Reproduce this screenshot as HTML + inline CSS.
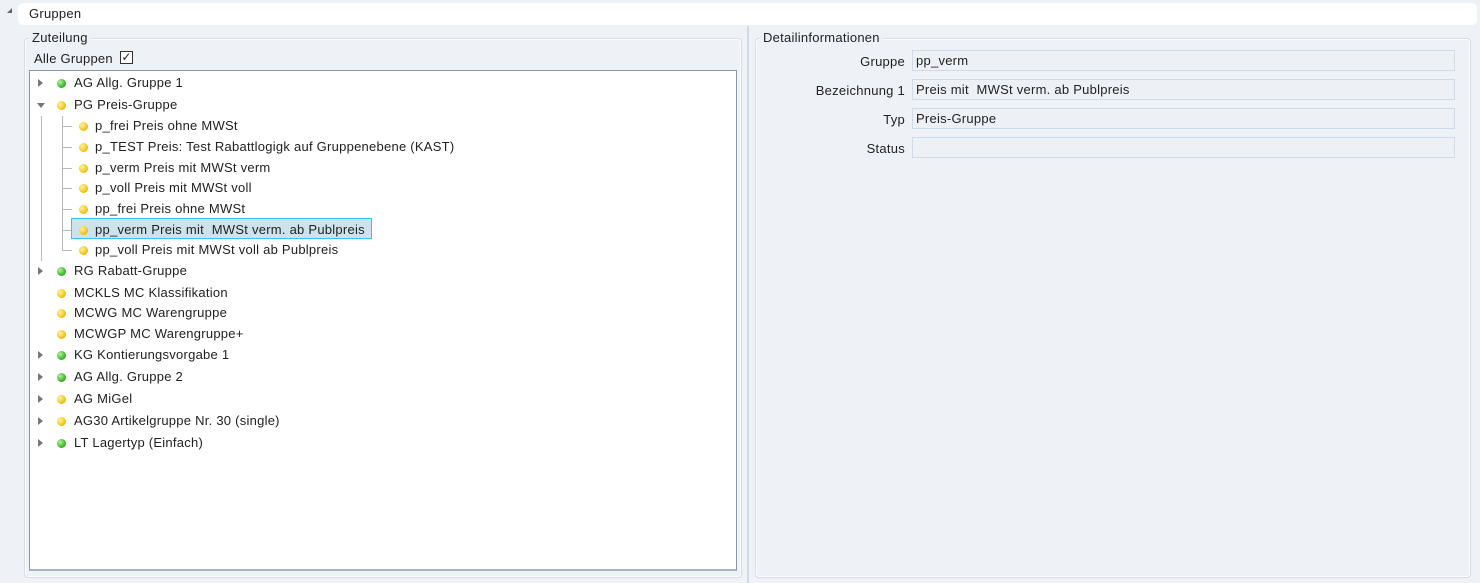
<!DOCTYPE html>
<html><head><meta charset="utf-8"><style>
*{box-sizing:border-box;margin:0;padding:0}
body{width:1480px;height:583px;background:#eef1f6;font-family:"Liberation Sans",sans-serif;font-size:13px;color:#222;position:relative;overflow:hidden;letter-spacing:0.25px}
.a{position:absolute}
.hdr{left:18px;top:3px;width:1459px;height:22px;background:#fff;border-radius:5px;padding:3px 0 0 11px}
.fs{border:1px solid #d6dde6;border-radius:4px;box-shadow:inset 0 0 0 1px #fff}
.leg{background:#eef1f6;padding:0 3px;line-height:14px}
.tree{left:29px;top:70px;width:708px;height:501px;background:#fff;border:1px solid #8a97a8;border-bottom:2px solid #a9b3c0}
.row{position:absolute;white-space:nowrap;line-height:16px;height:16px}
.dot{position:absolute;width:9px;height:9px;border-radius:50%;top:4px}
.g{background:radial-gradient(circle at 35% 35%,#b4f29a,#3cb72a 60%,#2a8f1d)}
.y{background:radial-gradient(circle at 35% 35%,#fff2a8,#f2c617 60%,#c99a0a)}
.tri{position:absolute;width:0;height:0}
.tr{border-left:5px solid #777;border-top:4px solid transparent;border-bottom:4px solid transparent;top:4px}
.td{border-top:5px solid #777;border-left:4px solid transparent;border-right:4px solid transparent;top:6px}
.lbl{position:absolute;width:150px;text-align:right;line-height:21px}
.inp{position:absolute;left:912px;width:543px;height:21px;border:1px solid #cfdbe8;background:#edf0f5;padding:2px 0 0 3px;line-height:15px}
</style></head><body>
<div class="a" style="left:7px;top:8px;border-right:5px solid #666;border-top:5px solid transparent;width:0;height:0"></div>
<div class="a hdr">Gruppen</div>

<div class="a fs" style="left:24px;top:38px;width:718px;height:540px"></div>
<div class="a leg" style="left:29px;top:31px">Zuteilung</div>
<div class="a" style="left:34px;top:51px">Alle Gruppen</div>
<div class="a" style="left:120px;top:51px;width:13px;height:13px;border:1px solid #333;background:#fff;font-size:12px;line-height:11px;text-align:center">✓</div>
<div class="a tree"></div>

<div class="a" style="left:747px;top:26px;width:2px;height:557px;background:#d4dae3"></div>

<div class="a fs" style="left:755px;top:38px;width:716px;height:540px"></div>
<div class="a leg" style="left:760px;top:31px">Detailinformationen</div>

<div class="a lbl" style="left:755px;top:51px">Gruppe</div>
<div class="inp" style="top:50px">pp_verm</div>
<div class="a lbl" style="left:755px;top:80px">Bezeichnung 1</div>
<div class="inp" style="top:79px">Preis mit&nbsp; MWSt verm. ab Publpreis</div>
<div class="a lbl" style="left:755px;top:109px">Typ</div>
<div class="inp" style="top:108px">Preis-Gruppe</div>
<div class="a lbl" style="left:755px;top:138px">Status</div>
<div class="inp" style="top:137px"></div>

<div class="a" style="left:41px;top:116px;width:1px;height:145px;background:#bbb"></div>
<div class="a" style="left:62px;top:116px;width:1px;height:134px;background:#bbb"></div>
<div class="a" style="left:62px;top:126px;width:10px;height:1px;background:#bbb"></div>
<div class="a" style="left:62px;top:147px;width:10px;height:1px;background:#bbb"></div>
<div class="a" style="left:62px;top:168px;width:10px;height:1px;background:#bbb"></div>
<div class="a" style="left:62px;top:188px;width:10px;height:1px;background:#bbb"></div>
<div class="a" style="left:62px;top:209px;width:10px;height:1px;background:#bbb"></div>
<div class="a" style="left:62px;top:230px;width:10px;height:1px;background:#bbb"></div>
<div class="a" style="left:62px;top:250px;width:10px;height:1px;background:#bbb"></div>

<div class="a" style="left:71px;top:218px;width:301px;height:21px;background:#cde3ec;border:1px solid #3cc3e6"></div>

<div class="row" style="left:38px;top:75px"><span class="tri tr"></span><span class="dot g" style="left:19px"></span><span style="margin-left:36px">AG Allg. Gruppe 1</span></div>
<div class="row" style="left:37px;top:97px"><span class="tri td"></span><span class="dot y" style="left:20px"></span><span style="margin-left:37px">PG Preis-Gruppe</span></div>
<div class="row" style="left:78px;top:118px"><span class="dot y" style="left:1px"></span><span style="margin-left:17px">p_frei Preis ohne MWSt</span></div>
<div class="row" style="left:78px;top:139px"><span class="dot y" style="left:1px"></span><span style="margin-left:17px">p_TEST Preis: Test Rabattlogigk auf Gruppenebene (KAST)</span></div>
<div class="row" style="left:78px;top:160px"><span class="dot y" style="left:1px"></span><span style="margin-left:17px">p_verm Preis mit MWSt verm</span></div>
<div class="row" style="left:78px;top:180px"><span class="dot y" style="left:1px"></span><span style="margin-left:17px">p_voll Preis mit MWSt voll</span></div>
<div class="row" style="left:78px;top:201px"><span class="dot y" style="left:1px"></span><span style="margin-left:17px">pp_frei Preis ohne MWSt</span></div>
<div class="row" style="left:78px;top:222px"><span class="dot y" style="left:1px"></span><span style="margin-left:17px">pp_verm Preis mit&nbsp; MWSt verm. ab Publpreis</span></div>
<div class="row" style="left:78px;top:242px"><span class="dot y" style="left:1px"></span><span style="margin-left:17px">pp_voll Preis mit MWSt voll ab Publpreis</span></div>
<div class="row" style="left:38px;top:263px"><span class="tri tr"></span><span class="dot g" style="left:19px"></span><span style="margin-left:36px">RG Rabatt-Gruppe</span></div>
<div class="row" style="left:38px;top:285px"><span class="dot y" style="left:19px"></span><span style="margin-left:36px">MCKLS MC Klassifikation</span></div>
<div class="row" style="left:38px;top:305px"><span class="dot y" style="left:19px"></span><span style="margin-left:36px">MCWG MC Warengruppe</span></div>
<div class="row" style="left:38px;top:326px"><span class="dot y" style="left:19px"></span><span style="margin-left:36px">MCWGP MC Warengruppe+</span></div>
<div class="row" style="left:38px;top:347px"><span class="tri tr"></span><span class="dot g" style="left:19px"></span><span style="margin-left:36px">KG Kontierungsvorgabe 1</span></div>
<div class="row" style="left:38px;top:369px"><span class="tri tr"></span><span class="dot g" style="left:19px"></span><span style="margin-left:36px">AG Allg. Gruppe 2</span></div>
<div class="row" style="left:38px;top:391px"><span class="tri tr"></span><span class="dot y" style="left:19px"></span><span style="margin-left:36px">AG MiGel</span></div>
<div class="row" style="left:38px;top:413px"><span class="tri tr"></span><span class="dot y" style="left:19px"></span><span style="margin-left:36px">AG30 Artikelgruppe Nr. 30 (single)</span></div>
<div class="row" style="left:38px;top:435px"><span class="tri tr"></span><span class="dot g" style="left:19px"></span><span style="margin-left:36px">LT Lagertyp (Einfach)</span></div>
</body></html>
